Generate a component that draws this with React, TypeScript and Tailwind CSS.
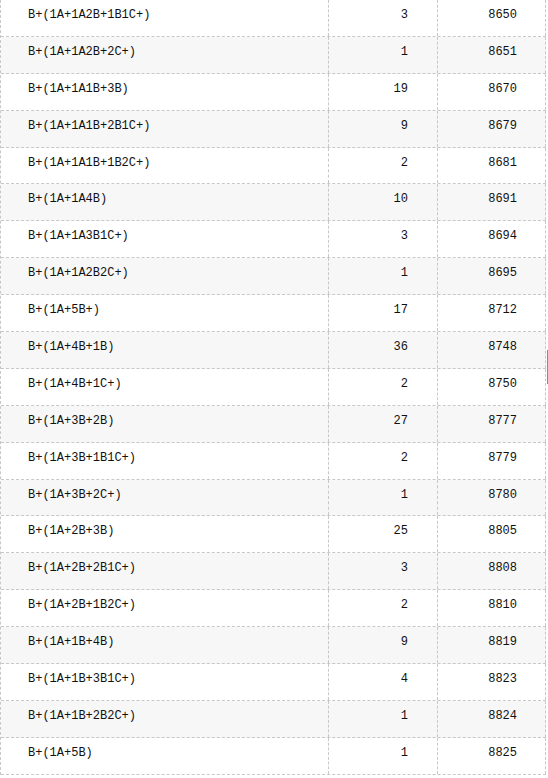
const rows: [string, number, number][] = [
  ["B+(1A+1A2B+1B1C+)", 3, 8650],
  ["B+(1A+1A2B+2C+)", 1, 8651],
  ["B+(1A+1A1B+3B)", 19, 8670],
  ["B+(1A+1A1B+2B1C+)", 9, 8679],
  ["B+(1A+1A1B+1B2C+)", 2, 8681],
  ["B+(1A+1A4B)", 10, 8691],
  ["B+(1A+1A3B1C+)", 3, 8694],
  ["B+(1A+1A2B2C+)", 1, 8695],
  ["B+(1A+5B+)", 17, 8712],
  ["B+(1A+4B+1B)", 36, 8748],
  ["B+(1A+4B+1C+)", 2, 8750],
  ["B+(1A+3B+2B)", 27, 8777],
  ["B+(1A+3B+1B1C+)", 2, 8779],
  ["B+(1A+3B+2C+)", 1, 8780],
  ["B+(1A+2B+3B)", 25, 8805],
  ["B+(1A+2B+2B1C+)", 3, 8808],
  ["B+(1A+2B+1B2C+)", 2, 8810],
  ["B+(1A+1B+4B)", 9, 8819],
  ["B+(1A+1B+3B1C+)", 4, 8823],
  ["B+(1A+1B+2B2C+)", 1, 8824],
  ["B+(1A+5B)", 1, 8825],
];

export default function App() {
  return (
    <div className="relative w-[548px] h-[778px] overflow-hidden bg-white text-[12px] leading-4 text-[#111] font-['Liberation_Mono',monospace]">
      <div className="w-[546px] border-l border-dashed border-[#c8c8c8]">
        {rows.map(([name, count, code], i) => (
          <div
            key={code}
            className={`grid grid-cols-[328px_109px_108px] h-[36.9px] border-b border-dashed border-[#c8c8c8] ${
              i % 2 === 1 ? "bg-[#f7f7f7]" : "bg-white"
            }`}
          >
            <div className="pl-[27px] pt-[7px] border-r border-dashed border-[#c8c8c8]">{name}</div>
            <div className="pr-[29px] pt-[7px] text-right border-r border-dashed border-[#c8c8c8]">{count}</div>
            <div className="pr-[28px] pt-[7px] text-right border-r border-dashed border-[#c8c8c8]">{code}</div>
          </div>
        ))}
      </div>
      <div className="absolute left-[547px] top-[350px] w-px h-[34px] bg-[#8a8a8a]" />
    </div>
  );
}
